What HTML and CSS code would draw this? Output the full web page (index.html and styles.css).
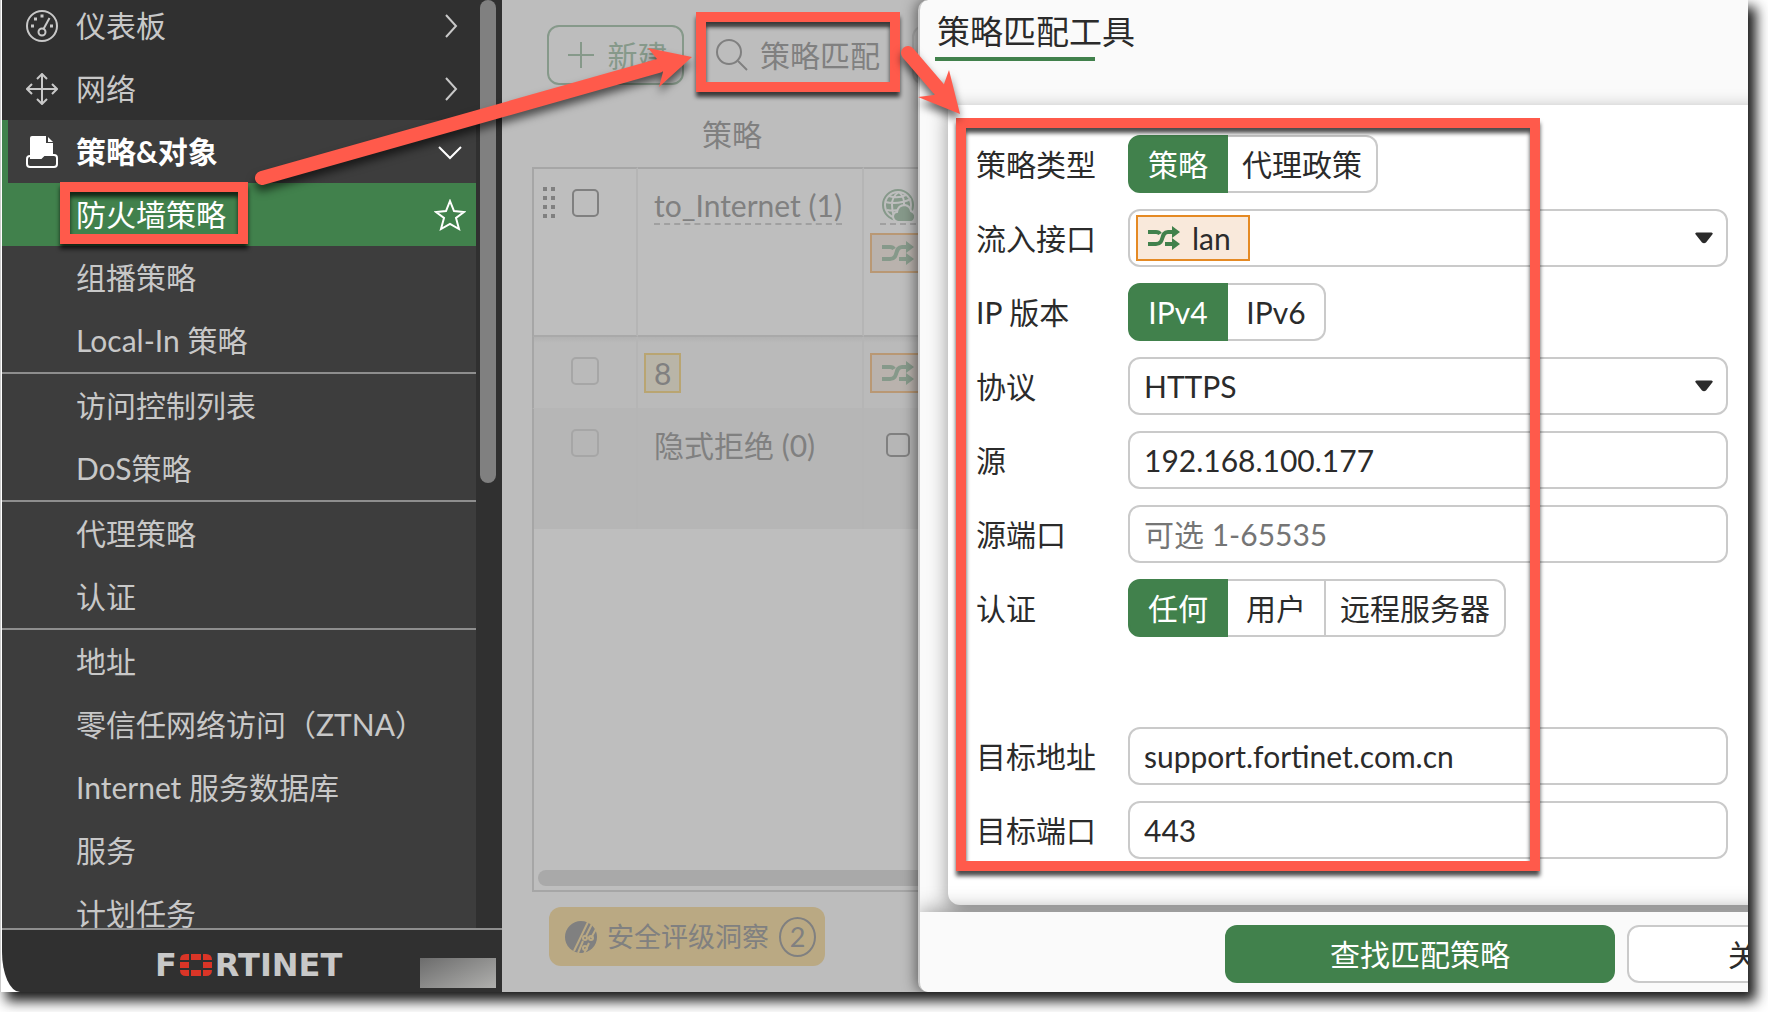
FILE: index.html
```html
<!DOCTYPE html>
<html lang="zh-CN">
<head>
    <meta charset="UTF-8">
    <meta name="viewport" content="width=device-width, initial-scale=1.0">
    <title>策略匹配工具</title>
    <link rel="stylesheet" href="styles.css">
</head>
<body>
    <!-- Shared icons -->
    <svg class="defs" width="0" height="0" aria-hidden="true">
        <symbol id="shuffle" viewBox="0 0 32 24">
            <path d="M0 6h8q3 0 4 2M0 18h8c9 0 4-12 12-12h5M17 18h8" fill="none" stroke="currentColor" stroke-width="4"/>
            <path d="M24 0l8 6-8 6zM24 12l8 6-8 6z" fill="currentColor"/>
        </symbol>
        <symbol id="right" viewBox="0 0 32 32">
            <path d="M12 5l10 11-10 11" fill="none" stroke="currentColor" stroke-width="2"/>
        </symbol>
        <symbol id="caret" viewBox="0 0 18 12">
            <path d="M1.500 .5h15q2 .5 .8 2L11 10.500q-2 1.500-4 0L.7 2.500Q-.5 1 1.500 .5z" fill="currentColor"/>
        </symbol>
    </svg>

    <div class="window">
        <!-- Sidebar -->
        <aside class="sidebar">
            <div class="menu-area">
                <nav class="menu">
                    <a class="item" href="#">
                        <svg class="icon" viewBox="0 0 32 32" fill="none" stroke="currentColor" stroke-width="2">
                            <circle cx="16" cy="16" r="15"/>
                            <circle cx="16" cy="22" r="3.500"/>
                            <path d="M17.500 19l6-11"/>
                            <path d="M5 16h3M8 9h3M14.500 6h3M24 16h3" stroke-width="3"/>
                        </svg>
                        <span>仪表板</span>
                        <svg class="icon end"><use href="#right"/></svg>
                    </a>
                    <a class="item" href="#">
                        <svg class="icon" viewBox="0 0 32 32" fill="none" stroke="currentColor" stroke-width="2">
                            <path d="M16 1v30M1 16h30M11 6l5-5 5 5M11 26l5 5 5-5M6 11l-5 5 5 5M26 11l5 5-5 5"/>
                        </svg>
                        <span>网络</span>
                        <svg class="icon end"><use href="#right"/></svg>
                    </a>
                    <a class="item open" href="#">
                        <svg class="icon" viewBox="0 0 32 32">
                            <path d="M4 20V2q0-2 2-2h14v7h7v12h-9l-3 3H4z" fill="currentColor"/>
                            <path d="M22 1l5 5h-5z" fill="currentColor"/>
                            <path d="M4 20q-3 0-3 3v5q0 3 3 3h24q3 0 3-3v-6q0-3-3-3H18l-3 3H4" fill="none" stroke="currentColor" stroke-width="2"/>
                        </svg>
                        <span>策略&amp;对象</span>
                        <svg class="icon end" viewBox="0 0 32 32"><path d="M5 11l11 11 11-11" fill="none" stroke="currentColor" stroke-width="2"/></svg>
                    </a>
                    <a class="item sub active" href="#">
                        <span>防火墙策略</span>
                        <svg class="icon end" viewBox="0 0 32 32"><path d="M16 2l4 10 10 1-8 6 3 11-9-5-9 5 3-11-8-6 10-1z" fill="none" stroke="currentColor" stroke-width="2"/></svg>
                    </a>
                    <a class="item sub" href="#">组播策略</a>
                    <a class="item sub" href="#">Local-In 策略</a>
                    <a class="item sub divided" href="#">访问控制列表</a>
                    <a class="item sub" href="#">DoS策略</a>
                    <a class="item sub divided" href="#">代理策略</a>
                    <a class="item sub" href="#">认证</a>
                    <a class="item sub divided" href="#">地址</a>
                    <a class="item sub" href="#">零信任网络访问（ZTNA）</a>
                    <a class="item sub" href="#">Internet 服务数据库</a>
                    <a class="item sub" href="#">服务</a>
                    <a class="item sub" href="#">计划任务</a>
                </nav>
                <div class="scroll-track"><div class="scroll-thumb"></div></div>
            </div>
            <div class="brand">
                <div class="logo">
                    <span>F</span>
                    <svg viewBox="0 0 32 22" width="32" height="22" fill="#da3527">
                        <path d="M0 6q0-6 6-6h3v6zM11 0h10v6H11zM23 0h3q6 0 6 6h-9zM0 8h9v6H0zM23 8h9v6h-9zM0 16h9v6H6q-6 0-6-6zM11 16h10v6H11zM23 16h9q0 6-6 6h-3z"/>
                    </svg>
                    <span>RTINET</span>
                </div>
                <div class="cover"></div>
            </div>
        </aside>

        <!-- Policy list -->
        <main class="list">
            <div class="toolbar">
                <button class="tool create" type="button">
                    <svg width="26" height="26" viewBox="0 0 26 26"><path d="M13 0v26M0 13h26" stroke="currentColor" stroke-width="2"/></svg>
                    新建
                </button>
                <button class="tool lookup" type="button">
                    <svg width="32" height="32" viewBox="0 0 32 32" fill="none" stroke="currentColor" stroke-width="2"><circle cx="13" cy="13" r="12"/><path d="M22 22l9 9"/></svg>
                    策略匹配
                </button>
                <button class="tool" type="button" aria-label="搜索"></button>
            </div>

            <table class="policies">
                <thead>
                    <tr><th class="col-check"></th><th class="col-name">策略</th><th></th></tr>
                </thead>
                <tbody>
                    <tr class="row-main">
                        <td>
                            <div class="picker">
                                <svg width="12" height="32" viewBox="0 0 12 32" fill="currentColor">
                                    <path d="M0 0h4v4H0zM8 0h4v4H8zM0 9h4v4H0zM8 9h4v4H8zM0 18h4v4H0zM8 18h4v4H8zM0 27h4v4H0zM8 27h4v4H8z"/>
                                </svg>
                                <input type="checkbox" aria-label="to_Internet">
                            </div>
                        </td>
                        <td class="text"><span class="dashed">to_Internet (1)</span></td>
                        <td>
                            <span class="dashed globe">
                                <svg width="32" height="32" viewBox="0 0 32 32">
                                    <circle cx="16" cy="16" r="15" fill="none" stroke="currentColor" stroke-width="2"/>
                                    <circle cx="16" cy="16" r="12" fill="currentColor"/>
                                    <path d="M3 13q13 3 26-3M5 21q11 2 22-3M17 3q-7 4-7 13 0 6 2 12M17 3q6 5 5 15M7 7q9 3 17-1" fill="none" stroke="#bebebe" stroke-width="2"/>
                                    <path d="M16 33q-5-1-5-6 1-4 4-4 1-7 8-7 5 1 6 6 5 2 4 7-1 4-4 4z" fill="currentColor" stroke="#bebebe" stroke-width="2"/>
                                </svg>
                            </span>
                            <span class="tag"><svg width="32" height="24"><use href="#shuffle"/></svg></span>
                        </td>
                    </tr>
                    <tr class="row-local">
                        <td><div class="picker"><input class="faint" type="checkbox" aria-label="8"></div></td>
                        <td><span class="tag yellow">8</span></td>
                        <td><span class="tag"><svg width="32" height="24"><use href="#shuffle"/></svg></span></td>
                    </tr>
                    <tr class="row-deny">
                        <td><div class="picker"><input class="faint" type="checkbox" aria-label="隐式拒绝"></div></td>
                        <td class="text">隐式拒绝 (0)</td>
                        <td class="text"><input class="small" type="checkbox" aria-label="全部"></td>
                    </tr>
                    <tr class="row-rest">
                        <td colspan="3"><div class="scroll-bar"></div></td>
                    </tr>
                </tbody>
            </table>

            <button class="insight" type="button">
                <svg width="32" height="32" viewBox="0 0 32 32">
                    <circle cx="16" cy="16" r="16" fill="currentColor"/>
                    <path d="M23 1L9 30M27 3L21 15M18 20L13 32M31 8L26 17M24 22L19 33" stroke="#baa983" stroke-width="2" fill="none"/>
                    <g fill="none" stroke="#baa983" stroke-width="2"><circle cx="20" cy="17" r="2"/><circle cx="26" cy="17" r="2"/><circle cx="20" cy="27" r="2"/></g>
                </svg>
                安全评级洞察
                <span class="count">2</span>
            </button>
        </main>

        <!-- Policy match tool -->
        <section class="panel">
            <header class="panel-head">
                <h1>策略匹配工具</h1>
            </header>
            <form class="card" id="match">
                <div class="field">
                    <span class="label" id="type-label">策略类型</span>
                    <div class="segments" role="radiogroup" aria-labelledby="type-label">
                        <label><input type="radio" name="type" checked><span>策略</span></label>
                        <label><input type="radio" name="type"><span>代理政策</span></label>
                    </div>
                </div>
                <div class="field">
                    <label class="label" for="iface">流入接口</label>
                    <button class="control picker-box" id="iface" type="button" aria-haspopup="listbox">
                        <span class="chip"><svg width="32" height="24"><use href="#shuffle"/></svg><span>lan</span></span>
                        <svg class="caret" width="18" height="12"><use href="#caret"/></svg>
                    </button>
                </div>
                <div class="field">
                    <span class="label" id="ip-label">IP 版本</span>
                    <div class="segments" role="radiogroup" aria-labelledby="ip-label">
                        <label><input type="radio" name="ip" checked><span>IPv4</span></label>
                        <label><input type="radio" name="ip"><span>IPv6</span></label>
                    </div>
                </div>
                <div class="field">
                    <label class="label" for="proto">协议</label>
                    <div class="select">
                        <select class="control" id="proto"><option>HTTPS</option></select>
                        <svg class="caret" width="18" height="12"><use href="#caret"/></svg>
                    </div>
                </div>
                <div class="field">
                    <label class="label" for="src">源</label>
                    <input class="control" id="src" type="text" value="192.168.100.177">
                </div>
                <div class="field">
                    <label class="label" for="sport">源端口</label>
                    <input class="control" id="sport" type="text" placeholder="可选 1-65535">
                </div>
                <div class="field">
                    <span class="label" id="auth-label">认证</span>
                    <div class="segments" role="radiogroup" aria-labelledby="auth-label">
                        <label><input type="radio" name="auth" checked><span>任何</span></label>
                        <label><input type="radio" name="auth"><span>用户</span></label>
                        <label><input type="radio" name="auth"><span>远程服务器</span></label>
                    </div>
                </div>
                <div class="field spaced">
                    <label class="label" for="dst">目标地址</label>
                    <input class="control" id="dst" type="text" value="support.fortinet.com.cn">
                </div>
                <div class="field">
                    <label class="label" for="dport">目标端口</label>
                    <input class="control" id="dport" type="text" value="443">
                </div>
            </form>
            <footer class="actions">
                <button class="primary" type="submit" form="match">查找匹配策略</button>
                <button class="secondary" type="button">关闭</button>
            </footer>
        </section>

        <!-- Annotations over the window -->
        <div class="mark mark-menu"></div>
        <div class="mark mark-button"></div>
        <div class="mark mark-form"></div>
        <svg class="arrows" aria-hidden="true">
            <g stroke="#ff5a4b" stroke-width="14" stroke-linecap="round">
                <path d="M262 178L658 66"/>
                <path d="M908 53L938 88"/>
            </g>
            <g fill="#ff5a4b">
                <path d="M692 57L648 48 657 59 663 72 659 87z"/>
                <path d="M960 114L949 70 944 84 934 95 918 97z"/>
            </g>
        </svg>
    </div>
</body>
</html>
```

FILE: styles.css
```css
* {
    margin: 0;
    padding: 0;
    box-sizing: border-box;
}

body {
    height: 100vh;
    padding: 0 20px 20px 0;
    overflow: hidden;
    background-color: white;
    color: #2b2b2b;
    font-family: Lato, "Noto Sans CJK SC", sans-serif;
    font-size: 30px;
    line-height: 36px;
}

button,
input,
select {
    font: inherit;
    color: inherit;
}

a {
    color: inherit;
    text-decoration: none;
}

svg {
    display: block;
    flex: none;
}

.defs {
    position: absolute;
}

.window {
    position: relative;
    display: flex;
    height: 100%;
    border-left: 1px solid #cccccc;
    padding-left: 1px;
    background-color: white;
    box-shadow: 7px 8px 12px 1px rgba(0, 0, 0, 0.9);
}

/* Sidebar */
.sidebar {
    flex: 0 0 500px;
    display: flex;
    flex-direction: column;
    overflow: hidden;
    background-color: #303030;
    color: #c8c8c8;
    border-bottom-left-radius: 18px 40px;
}

.menu-area {
    flex: 1;
    min-height: 0;
    display: flex;
    overflow: hidden;
}

/* the list is scrolled a few pixels down */
.menu {
    flex: 1;
    margin-top: -6px;
}

.item {
    display: flex;
    align-items: center;
    gap: 18px;
    height: 63px;
    padding: 0 10px 0 24px;
}

.item span {
    padding-bottom: 2px;
}

.icon {
    width: 32px;
    height: 32px;
}

.end {
    margin-left: auto;
}

.item.open {
    border-left: 6px solid #41814c;
    padding-left: 18px;
    background-color: #3d3d3d;
    color: white;
    font-weight: bold;
}

.item.sub {
    padding-left: 74px;
    padding-bottom: 2px;
    background-color: #3d3d3d;
}

.item.active {
    padding-bottom: 0;
    background-color: #41814c;
    color: white;
}

.item.divided {
    height: 65px;
    border-top: 2px solid #8e8e8e;
}

.scroll-track {
    width: 26px;
    padding-left: 4px;
}

.scroll-thumb {
    width: 16px;
    height: 52%;
    background-color: #808080;
    border-radius: 8px;
}

.brand {
    height: 64px;
    display: flex;
    align-items: center;
    position: relative;
    border-top: 2px solid #8e8e8e;
}

.logo {
    display: flex;
    align-items: center;
    gap: 3px;
    padding: 8px 0 0 153px;
    font-family: "DejaVu Sans", sans-serif;
    font-size: 32px;
    font-weight: bold;
}

.cover {
    position: absolute;
    right: 6px;
    bottom: 4px;
    width: 76px;
    height: 30px;
    background: linear-gradient(155deg, #6c6c6c, #b0b0ae);
}

/* Policy list */
.list {
    flex: 1;
    min-width: 0;
    display: flex;
    flex-direction: column;
    align-items: flex-start;
    padding: 25px 0 26px 30px;
    overflow: hidden;
    background-color: #bdbdbd;
    color: #808080;
}

.toolbar {
    display: flex;
    gap: 12px;
    margin: 0 0 16px 15px;
}

.tool {
    flex: none;
    display: flex;
    align-items: center;
    justify-content: center;
    gap: 14px;
    height: 60px;
    min-width: 60px;
    background: none;
    border: 2px solid #acacac;
    border-radius: 12px;
}

.create {
    width: 137px;
    padding-left: 4px;
    border-color: #86998a;
    color: #86998a;
}

.lookup {
    width: 204px;
    gap: 12px;
}

.policies {
    flex: 1;
    width: 600px;
    table-layout: fixed;
    border-spacing: 0;
}

.policies th {
    height: 66px;
    padding-left: 64px;
    font-weight: normal;
    text-align: left;
}

.policies .col-check {
    width: 106px;
    padding: 0;
}

.policies .col-name {
    width: 226px;
}

.policies td {
    padding: 16px 6px 0;
    border-right: 2px solid #b5b5b5;
    vertical-align: top;
}

.policies td:first-child {
    border-left: 2px solid #a6a6a6;
}

.row-main td {
    height: 170px;
    padding-top: 18px;
    border-top: 2px solid #a6a6a6;
    border-bottom: 2px solid #a9a9a9;
    background-color: #bebebe;
}

.row-local td {
    height: 72px;
    background: linear-gradient(#b2b2b2, #bababa 6px);
    border-bottom: 1px solid #b6b6b6;
}

.row-deny td {
    height: 120px;
    padding-top: 18px;
    background-color: #b6b6b6;
}

.policies .text {
    padding-left: 16px;
}

.policies .row-rest td {
    padding: 0 4px 4px;
    border-bottom: 2px solid #a6a6a6;
    background-color: #bebebe;
    vertical-align: bottom;
}

.picker {
    display: flex;
    justify-content: flex-end;
    gap: 17px;
    padding: 0 31px 0 3px;
}

.row-local .picker {
    padding-top: 4px;
}

.policies input {
    appearance: none;
    display: block;
    width: 28px;
    height: 28px;
    margin-top: 2px;
    border: 2px solid #808080;
    border-radius: 5px;
}

.row-local input {
    margin-top: 0;
}

.policies .faint {
    border-color: #a6a6a6;
}

.policies .small {
    width: 24px;
    height: 24px;
    margin: 6px 0 0 6px;
}

.dashed {
    display: inline-block;
    border-bottom: 2px dashed #a0a0a0;
}

.globe {
    display: block;
    width: 36px;
    height: 38px;
    margin: 0 0 8px 10px;
    padding: 2px 0 0 2px;
    color: #86998a;
}

.tag {
    display: flex;
    align-items: center;
    width: 80px;
    height: 40px;
    padding: 0 10px;
    background-color: #b9b2ad;
    border: 2px solid #b99874;
    color: #86998a;
}

.tag.yellow {
    width: 37px;
    padding: 0 8px;
    background-color: #b9b5a8;
    border-color: #b9a572;
    color: #808080;
}

.scroll-bar {
    height: 16px;
    background-color: #a9a9a9;
    border-radius: 8px;
}

.insight {
    display: flex;
    align-items: center;
    gap: 10px;
    height: 59px;
    margin: 15px 0 0 17px;
    padding: 0 9px 0 16px;
    background-color: #baa983;
    border: none;
    border-radius: 12px;
    font-size: 27px;
}

.count {
    width: 37px;
    height: 40px;
    border: 2px solid #808080;
    border-radius: 50%;
}

/* Panel, its rounded edge lies over the list */
.panel {
    flex: 0 1 830px;
    min-width: 0;
    display: flex;
    flex-direction: column;
    margin-left: -12px;
    overflow: hidden;
    z-index: 1;
    background-color: #fafafa;
    border-left: 2px solid #cacaca;
    border-radius: 10px 0 0 10px;
    box-shadow: -2px 0 14px rgba(0, 0, 0, 0.5);
    clip-path: inset(0 0 0 -20px);
}

.panel-head {
    height: 105px;
    padding: 11px 15px 0;
}

h1 {
    width: 160px;
    padding: 0 2px 6px;
    border-bottom: 4px solid #41814c;
    font-size: 33px;
    font-weight: normal;
    line-height: 40px;
    white-space: nowrap;
}

.card {
    flex: 1;
    display: flex;
    flex-direction: column;
    gap: 16px;
    margin: 0 -20px 7px 28px;
    padding: 30px 40px 0 28px;
    background-color: white;
    border-radius: 0 0 0 12px;
    box-shadow: 0 6px 20px rgba(0, 0, 0, 0.4);
}

.field {
    display: flex;
    align-items: center;
    height: 58px;
}

.field.spaced {
    margin-top: 74px;
}

.label {
    flex: 0 0 152px;
}

.control {
    flex: 1;
    width: 100%;
    min-width: 0;
    height: 58px;
    padding: 0 14px;
    background-color: white;
    border: 2px solid #cacaca;
    border-radius: 12px;
}

.control::placeholder {
    color: #757575;
}

.select {
    flex: 1;
    display: grid;
    align-items: center;
}

.select > * {
    grid-area: 1 / 1;
}

.select .control {
    appearance: none;
}

.select .caret {
    justify-self: end;
    margin-right: 15px;
    pointer-events: none;
}

.picker-box {
    display: flex;
    align-items: center;
    justify-content: space-between;
    padding: 0 13px 0 6px;
}

.chip {
    display: flex;
    align-items: center;
    gap: 12px;
    height: 46px;
    padding: 0 17px 0 10px;
    background-color: #f9e9db;
    border: 2px solid #e58a24;
}

.chip svg {
    color: #41814c;
}

.segments {
    display: flex;
}

.segments label {
    position: relative;
}

.segments input {
    position: absolute;
    opacity: 0;
}

.segments span {
    display: flex;
    align-items: center;
    justify-content: center;
    min-width: 98px;
    height: 58px;
    padding: 0 14px;
    border: 2px solid #cacaca;
    border-left-width: 0;
}

.segments label:first-child span {
    border-radius: 12px 0 0 12px;
}

.segments label:last-child span {
    border-radius: 0 12px 12px 0;
}

.segments input:checked + span {
    min-width: 100px;
    background-color: #41814c;
    border-color: #41814c;
    border-left-width: 2px;
    color: white;
}

/* the close button runs past the right edge */
.actions {
    position: relative;
    display: flex;
    justify-content: flex-end;
    gap: 12px;
    height: 80px;
    margin-right: -141px;
    padding-top: 13px;
    background-color: #fafafa;
    box-shadow: 0 -2px 20px rgba(0, 0, 0, 0.4);
}

.actions button {
    height: 58px;
    border-radius: 12px;
}

.primary {
    width: 390px;
    background-color: #41814c;
    border: none;
    color: white;
}

.secondary {
    width: 262px;
    background-color: white;
    border: 2px solid #cacaca;
}

/* Annotations */
.mark {
    position: absolute;
    z-index: 2;
    border: 10px solid #ff5a4b;
    filter: drop-shadow(0 5px 2px rgba(0, 0, 0, 0.7));
    pointer-events: none;
}

.mark-menu {
    left: 59px;
    top: 182px;
    width: 188px;
    height: 62px;
}

.mark-button {
    left: 695px;
    top: 12px;
    width: 204px;
    height: 80px;
}

.mark-form {
    left: 955px;
    top: 118px;
    width: 584px;
    height: 753px;
}

.arrows {
    position: absolute;
    z-index: 2;
    left: -1px;
    top: 0;
    width: 100%;
    height: 100%;
    filter: drop-shadow(0 6px 4px rgba(0, 0, 0, 0.6));
    pointer-events: none;
}
```
